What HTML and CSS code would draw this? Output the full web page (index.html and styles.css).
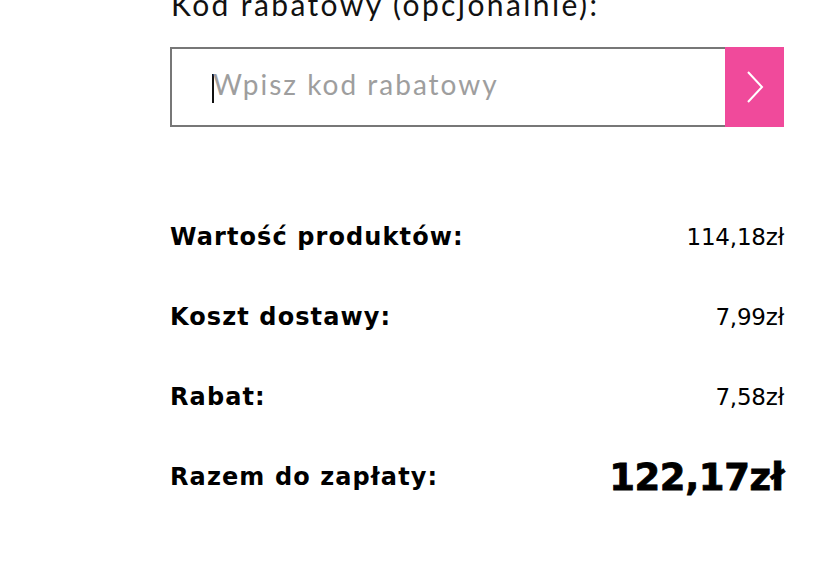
FILE: index.html
```html
<!DOCTYPE html>
<html lang="pl">
<head>
<meta charset="utf-8">
<link rel="stylesheet" href="styles.css">
</head>
<body>
<div class="panel">
  <div class="coupon-label">Kod rabatowy (opcjonalnie):</div>
  <div class="coupon">
    <div class="coupon-input"><span class="caret"></span><span class="placeholder">Wpisz kod rabatowy</span></div>
    <div class="coupon-btn">
      <svg width="20" height="34" viewBox="0 0 20 34"><path d="M3 2 L17 17 L3 32" fill="none" stroke="#fff" stroke-width="2"/></svg>
    </div>
  </div>
  <div class="summary">
    <div class="row"><span class="label">Wartość produktów:</span><span class="value">114,18zł</span></div>
    <div class="row"><span class="label">Koszt dostawy:</span><span class="value">7,99zł</span></div>
    <div class="row"><span class="label">Rabat:</span><span class="value">7,58zł</span></div>
    <div class="row"><span class="label">Razem do zapłaty:</span><span class="value total">122,17zł</span></div>
  </div>
</div>
</body>
</html>
```
FILE: styles.css
```css
html, body { margin: 0; padding: 0; background: #fff; overflow: hidden; }
body { width: 820px; height: 566px; }
.panel { margin-left: 170px; width: 614px; }
.coupon-label {
  font-family: "Lato", sans-serif;
  font-size: 30px;
  line-height: 36px;
  letter-spacing: 2.4px;
  color: #111;
  margin-top: -14px;
  padding-left: 1px;
  height: 36px;
}
.coupon { display: flex; height: 80px; margin-top: 25px; }
.coupon-input {
  flex: 1;
  border: 2px solid #777;
  border-right: none;
  display: flex;
  align-items: center;
  padding-left: 40px;
  padding-bottom: 6px;
}
.caret { width: 2px; height: 29px; background: #111; margin-top: 9px; }
.placeholder {
  font-family: "Lato", sans-serif;
  font-size: 28px;
  color: #9e9e9e;
  letter-spacing: 2px;
  margin-left: -1px;
}
.coupon-btn {
  width: 59px;
  background: #f04a9b;
  display: flex;
  align-items: center;
  justify-content: center;
}
.summary { margin-top: 70px; }
.row {
  height: 80px;
  display: flex;
  align-items: center;
  justify-content: space-between;
  font-family: "DejaVu Sans", sans-serif;
  color: #000;
}
.label { font-weight: 700; font-size: 24px; letter-spacing: 1.1px; }
.value { font-size: 23px; font-weight: 400; letter-spacing: -0.2px; }
.value.total { font-size: 37px; font-weight: 700; letter-spacing: -0.4px; -webkit-text-stroke: 0.8px #000; }
```
